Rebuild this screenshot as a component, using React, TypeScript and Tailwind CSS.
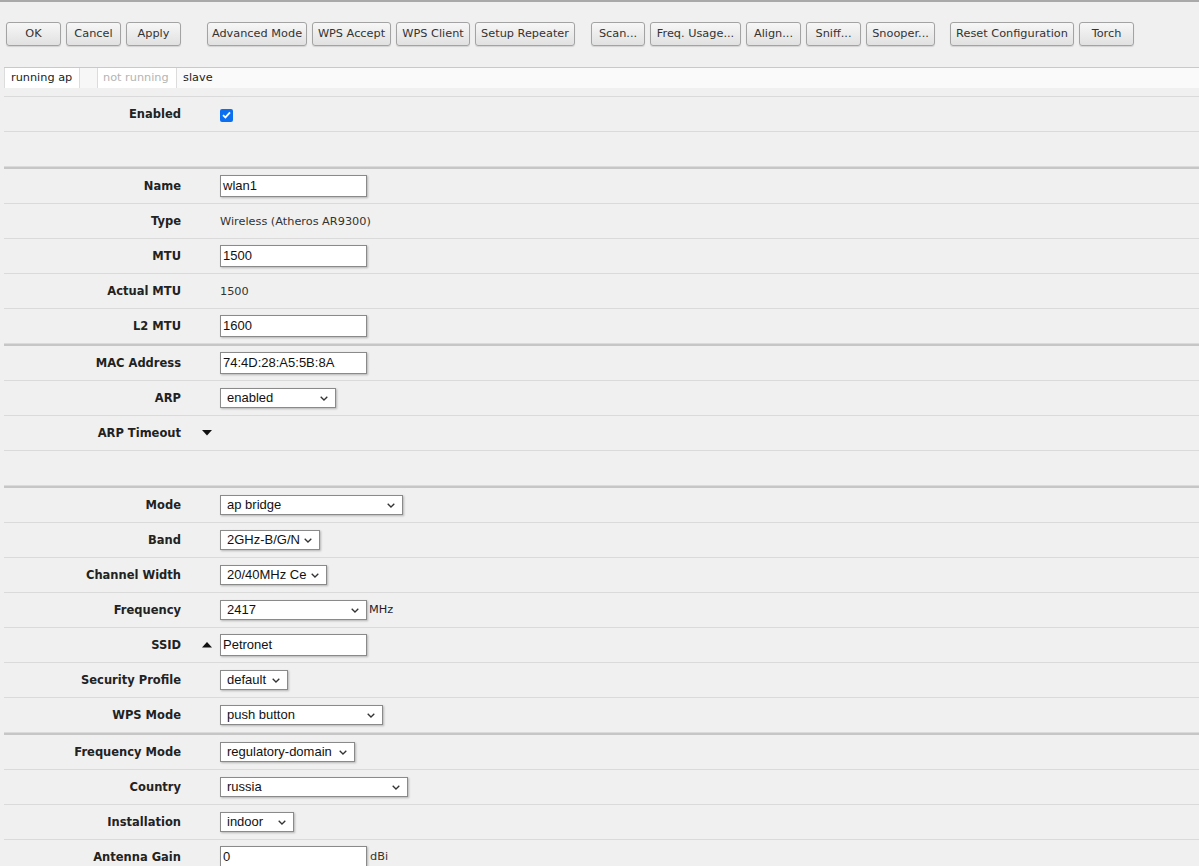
import React from "react";

const UI = "font-['DejaVu_Sans',Verdana,sans-serif]";
const FIELD = "font-['Liberation_Sans',Arial,sans-serif]";

function Btn({ label, w }: { label: string; w: string }) {
  return (
    <div
      className={`${w} h-[24px] shrink-0 rounded-[3px] border border-[#a3a3a3] bg-linear-to-b from-[#f7f7f7] to-[#e1e1e1] shadow-[0_1px_1px_rgba(0,0,0,0.12)] flex items-center justify-center text-[11.3px] text-[#333] whitespace-nowrap`}
    >
      {label}
    </div>
  );
}

function Chevron() {
  return (
    <svg width="8" height="5" viewBox="0 0 8 5" className="shrink-0">
      <path d="M0.7 0.7 L4 4 L7.3 0.7" fill="none" stroke="#333" strokeWidth="1.3" />
    </svg>
  );
}

function Select({ value, w }: { value: string; w: string }) {
  return (
    <div
      className={`${w} h-[20px] bg-white border border-[#8a8a8a] shadow-[1px_1px_2px_rgba(0,0,0,0.25)] flex items-center justify-between pl-[6px] pr-[7px] ${FIELD} text-[13px] text-[#111] whitespace-nowrap overflow-hidden`}
    >
      <span>{value}</span>
      <Chevron />
    </div>
  );
}

function Input({ value }: { value: string }) {
  return (
    <div
      className={`w-[147px] h-[22px] bg-white border border-[#8a8a8a] shadow-[1px_1px_2px_rgba(0,0,0,0.25)] flex items-center pl-[2px] ${FIELD} text-[13px] text-[#111] whitespace-nowrap`}
    >
      {value}
    </div>
  );
}

function TriDown() {
  return (
    <svg width="10" height="6" viewBox="0 0 10 6">
      <path d="M0 0 L10 0 L5 5.5 Z" fill="#111" />
    </svg>
  );
}
function TriUp() {
  return (
    <svg width="10" height="6" viewBox="0 0 10 6">
      <path d="M0 5.5 L10 5.5 L5 0 Z" fill="#111" />
    </svg>
  );
}

function Row({
  label,
  mark,
  children,
}: {
  label?: string;
  mark?: React.ReactNode;
  children?: React.ReactNode;
}) {
  return (
    <div className="h-[35px] border-b border-[#dadada] flex items-center">
      <div className="w-[177px] shrink-0 pt-[2px] text-right text-[11.5px] font-bold text-[#222]">{label}</div>
      <div className="w-[39px] shrink-0 pl-[21px] flex items-center">{mark}</div>
      <div className="flex items-center text-[11.3px] text-[#333]">{children}</div>
    </div>
  );
}

function Check() {
  return (
    <div className="mt-[2px] w-[13px] h-[13px] rounded-[2px] bg-[#0b6ff0] flex items-center justify-center">
      <svg width="9" height="8" viewBox="0 0 9 8">
        <path d="M1 4.2 L3.4 6.4 L8 1.3" fill="none" stroke="white" strokeWidth="1.8" />
      </svg>
    </div>
  );
}

export default function App() {
  return (
    <div className={`min-h-screen bg-[#f0f0f0] border-t-2 border-[#a9a9a9] ${UI}`}>
      {/* toolbar */}
      <div className="pt-[20px] pl-[6px] flex items-center">
        <div className="flex gap-[5px]">
          <Btn label="OK" w="w-[55px]" />
          <Btn label="Cancel" w="w-[55px]" />
          <Btn label="Apply" w="w-[55px]" />
        </div>
        <div className="flex gap-[5px] ml-[26px]">
          <Btn label="Advanced Mode" w="w-[100px]" />
          <Btn label="WPS Accept" w="w-[79px]" />
          <Btn label="WPS Client" w="w-[74px]" />
          <Btn label="Setup Repeater" w="w-[100px]" />
        </div>
        <div className="flex gap-[5px] ml-[16px]">
          <Btn label="Scan..." w="w-[54px]" />
          <Btn label="Freq. Usage..." w="w-[91px]" />
          <Btn label="Align..." w="w-[55px]" />
          <Btn label="Sniff..." w="w-[55px]" />
          <Btn label="Snooper..." w="w-[69px]" />
        </div>
        <div className="flex gap-[5px] ml-[15px]">
          <Btn label="Reset Configuration" w="w-[124px]" />
          <Btn label="Torch" w="w-[55px]" />
        </div>
      </div>

      {/* status bar */}
      <div className="mt-[21px] ml-[4px] h-[21px] border-t border-[#c9c9c9] bg-[#fafafa] flex text-[11.3px]">
        <div className="w-[76px] bg-white border-l border-r border-[#dcdcdc] pl-[6px] flex items-center text-[#222]">
          running ap
        </div>
        <div className="w-[18px] bg-[#f7f7f7] border-r border-[#dcdcdc]" />
        <div className="w-[79px] bg-white border-r border-[#dcdcdc] pl-[5px] flex items-center text-[#b4b4b4]">
          not running
        </div>
        <div className="pl-[6px] flex items-center text-[#222]">slave</div>
      </div>

      {/* form */}
      <div className="mt-[8px] ml-[4px] border-t border-[#dadada]">
        <div>
          <Row label="Enabled">
            <Check />
          </Row>
          <Row />
        </div>
        <div className="border-t-2 border-[#c6c6c6]">
          <Row label="Name">
            <Input value="wlan1" />
          </Row>
          <Row label="Type">
            <span className="pt-[2px]">Wireless (Atheros AR9300)</span>
          </Row>
          <Row label="MTU">
            <Input value="1500" />
          </Row>
          <Row label="Actual MTU">
            <span className="pt-[2px]">1500</span>
          </Row>
          <Row label="L2 MTU">
            <Input value="1600" />
          </Row>
        </div>
        <div className="border-t-2 border-[#c6c6c6]">
          <Row label="MAC Address">
            <Input value="74:4D:28:A5:5B:8A" />
          </Row>
          <Row label="ARP">
            <Select value="enabled" w="w-[116px]" />
          </Row>
          <Row label="ARP Timeout" mark={<TriDown />} />
          <Row />
        </div>
        <div className="border-t-2 border-[#c6c6c6]">
          <Row label="Mode">
            <Select value="ap bridge" w="w-[183px]" />
          </Row>
          <Row label="Band">
            <Select value="2GHz-B/G/N" w="w-[100px]" />
          </Row>
          <Row label="Channel Width">
            <Select value="20/40MHz Ce" w="w-[107px]" />
          </Row>
          <Row label="Frequency">
            <Select value="2417" w="w-[147px]" />
            <span className="ml-[2px] text-[#2a1a2a]">MHz</span>
          </Row>
          <Row label="SSID" mark={<TriUp />}>
            <Input value="Petronet" />
          </Row>
          <Row label="Security Profile">
            <Select value="default" w="w-[68px]" />
          </Row>
          <Row label="WPS Mode">
            <Select value="push button" w="w-[163px]" />
          </Row>
        </div>
        <div className="border-t-2 border-[#c6c6c6]">
          <Row label="Frequency Mode">
            <Select value="regulatory-domain" w="w-[135px]" />
          </Row>
          <Row label="Country">
            <Select value="russia" w="w-[188px]" />
          </Row>
          <Row label="Installation">
            <Select value="indoor" w="w-[74px]" />
          </Row>
          <Row label="Antenna Gain">
            <Input value="0" />
            <span className="ml-[3px]">dBi</span>
          </Row>
        </div>
      </div>
    </div>
  );
}
